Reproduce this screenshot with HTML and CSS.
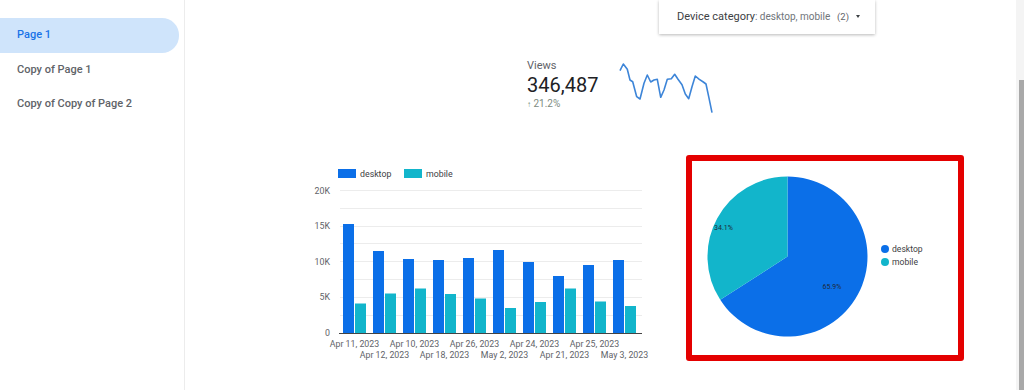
FILE: index.html
```html
<!DOCTYPE html>
<html>
<head>
<meta charset="utf-8">
<link rel="stylesheet" href="styles.css">
</head>
<body>
<div class="app">
  <nav class="sidebar">
    <div class="nav-item active">Page 1</div>
    <div class="nav-item">Copy of Page 1</div>
    <div class="nav-item">Copy of Copy of Page 2</div>
  </nav>
  <main class="main">
    <div class="filter-row">
      <div class="filter">
        <span class="filter-label">Device category<span class="filter-values">: desktop, mobile</span></span>
        <span class="filter-count">(2)</span>
        <span class="caret"></span>
      </div>
    </div>
    <div class="score-row">
      <div class="score">
        <div class="score-title">Views</div>
        <div class="score-value">346,487</div>
        <div class="score-delta"><span class="arrow">&#x2191;</span> 21.2%</div>
      </div>
      <svg class="spark" width="96" height="56" viewBox="0 0 96 56">
        <polyline fill="none" stroke="#3d85d8" stroke-width="1.6" stroke-linejoin="round" points="2,10.7 5.3,4 9.3,9.3 12,20 14.7,21.7 18.7,36.7 22,39 26,23.3 29.3,15 32.7,22 36,20 39.3,19.3 42.7,37.3 46,30 49.3,19.3 53.3,18.7 56.7,14.3 60,19.3 64,24.7 67.3,34 70.7,38.7 74,26.7 77.3,16 81.3,19.3 85.3,22 88,24 90.7,36.7 94,52.7"/>
      </svg>
    </div>
    <div class="chart-row">
      <svg class="bars" width="360" height="205" viewBox="0 0 360 205">
        <g class="legend">
          <rect x="38" y="9" width="18" height="9" fill="#0b6fe8"/>
          <text x="60" y="16.8">desktop</text>
          <rect x="104" y="9" width="18" height="9" fill="#12b5cb"/>
          <text x="126" y="16.8">mobile</text>
        </g>
        <g stroke="#ececec" stroke-width="1">
          <line x1="40" y1="30.5" x2="342" y2="30.5"/>
          <line x1="40" y1="48.5" x2="342" y2="48.5"/>
          <line x1="40" y1="66.5" x2="342" y2="66.5"/>
          <line x1="40" y1="83.5" x2="342" y2="83.5"/>
          <line x1="40" y1="101.5" x2="342" y2="101.5"/>
          <line x1="40" y1="119.5" x2="342" y2="119.5"/>
          <line x1="40" y1="137.5" x2="342" y2="137.5"/>
          <line x1="40" y1="155.5" x2="342" y2="155.5"/>
        </g>
        <g class="ylab" text-anchor="end">
          <text x="30" y="33.5">20K</text>
          <text x="30" y="69">15K</text>
          <text x="30" y="104.5">10K</text>
          <text x="30" y="140">5K</text>
          <text x="30" y="176">0</text>
        </g>
        <g fill="#0b6fe8">
          <rect x="43" y="64" width="11" height="109"/>
          <rect x="73" y="91" width="11" height="82"/>
          <rect x="103" y="99" width="11" height="74"/>
          <rect x="133" y="100" width="11" height="73"/>
          <rect x="163" y="98" width="11" height="75"/>
          <rect x="193" y="90" width="11" height="83"/>
          <rect x="223" y="102" width="11" height="71"/>
          <rect x="253" y="116" width="11" height="57"/>
          <rect x="283" y="105" width="11" height="68"/>
          <rect x="313" y="100" width="11" height="73"/>
        </g>
        <g fill="#12b5cb">
          <rect x="55" y="143.5" width="11" height="29.5"/>
          <rect x="85" y="133.5" width="11" height="39.5"/>
          <rect x="115" y="128.5" width="11" height="44.5"/>
          <rect x="145" y="134" width="11" height="39"/>
          <rect x="175" y="138.5" width="11" height="34.5"/>
          <rect x="205" y="148" width="11" height="25"/>
          <rect x="235" y="142" width="11" height="31"/>
          <rect x="265" y="128.5" width="11" height="44.5"/>
          <rect x="295" y="141.5" width="11" height="31.5"/>
          <rect x="325" y="146" width="11" height="27"/>
        </g>
        <line x1="39" y1="173.5" x2="342" y2="173.5" stroke="#444" stroke-width="1"/>
        <g class="xlab" text-anchor="middle">
          <text x="54.5" y="186.5">Apr 11, 2023</text>
          <text x="84.5" y="198">Apr 12, 2023</text>
          <text x="114.5" y="186.5">Apr 10, 2023</text>
          <text x="144.5" y="198">Apr 18, 2023</text>
          <text x="174.5" y="186.5">Apr 26, 2023</text>
          <text x="204.5" y="198">May 2, 2023</text>
          <text x="234.5" y="186.5">Apr 24, 2023</text>
          <text x="264.5" y="198">Apr 21, 2023</text>
          <text x="294.5" y="186.5">Apr 25, 2023</text>
          <text x="324.5" y="198">May 3, 2023</text>
        </g>
      </svg>
      <div class="pie-box">
        <svg class="pie" width="266" height="194" viewBox="0 0 266 194">
          <path d="M95.5,96.5 L95.5,16.5 A80,80 0 1 1 28.24,139.82 Z" fill="#0b6fe8"/>
          <path d="M95.5,96.5 L28.24,139.82 A80,80 0 0 1 95.5,16.5 Z" fill="#12b5cb"/>
          <text class="pct" x="31.5" y="69.5" text-anchor="middle">34.1%</text>
          <text class="pct" x="140" y="128.5" text-anchor="middle">65.9%</text>
          <circle cx="193" cy="89" r="4" fill="#0b6fe8"/>
          <text class="plegend" x="200" y="92">desktop</text>
          <circle cx="193" cy="102" r="4" fill="#12b5cb"/>
          <text class="plegend" x="200" y="105">mobile</text>
        </svg>
      </div>
    </div>
  </main>
  <div class="scrollbar"><div class="thumb"></div></div>
</div>
</body>
</html>
```

FILE: styles.css
```css
* { box-sizing: border-box; }
html, body { margin: 0; padding: 0; background: #fff; }
body { font-family: Roboto, "Liberation Sans", Arial, sans-serif; }

.app {
  display: flex;
  width: 1024px;
  height: 390px;
  overflow: hidden;
}

.sidebar {
  width: 185px;
  flex: none;
  border-right: 1px solid #ececec;
  padding-top: 18px;
}
.nav-item {
  width: 179px;
  height: 34.5px;
  line-height: 34.5px;
  padding-left: 17px;
  font-size: 11px;
  font-weight: 500;
  color: #5f6368;
  border-radius: 0 17px 17px 0;
}
.nav-item.active {
  background: #cfe4fb;
  color: #1a73e8;
}

.main {
  flex: 1;
  min-width: 0;
}

.filter-row { display: flex; padding-left: 474px; }
.filter {
  width: 216px;
  height: 34px;
  display: flex;
  align-items: center;
  padding: 0 15px 1px 18px;
  background: #fff;
  box-shadow: 0 1px 3px rgba(0,0,0,0.28);
}
.filter-label {
  flex: 1;
  font-size: 11px;
  color: #3c4043;
  white-space: nowrap;
}
.filter-values { font-size: 10px; color: #70757a; }
.filter-count { font-size: 9.5px; color: #5f6368; }
.caret {
  margin-left: 7px;
  width: 0;
  height: 0;
  border-left: 2.5px solid transparent;
  border-right: 2.5px solid transparent;
  border-top: 3px solid #3c4043;
}

.score-row {
  display: flex;
  margin-top: 25px;
  padding-left: 342px;
}
.score { width: 91px; }
.score-title { font-size: 11px; line-height: 14px; color: #5f6368; }
.score-value { font-size: 20px; line-height: 24px; color: #202124; }
.score-delta { font-size: 10px; line-height: 14px; color: #7d8b81; }
.score-delta .arrow { font-size: 8px; color: #6f8a73; }
.spark { display: block; margin-top: 1px; }

.chart-row {
  display: flex;
  align-items: flex-start;
  margin-top: 39px;
  padding-left: 115px;
}
.bars { display: block; margin-top: 5px; flex: none; }
.bars text { font-family: Roboto, "Liberation Sans", Arial, sans-serif; font-size: 8.8px; fill: #5f6368; }
.bars .legend text { fill: #3c4043; }

.pie-box {
  margin-left: 26px;
  width: 278px;
  height: 206px;
  border: 6px solid #e40000;
  border-radius: 3px;
  flex: none;
}
.pie { display: block; margin-top: -1px; }
.pie .pct { font-family: Roboto, "Liberation Sans", Arial, sans-serif; font-size: 7px; fill: #1f2a3a; }
.pie .plegend { font-family: Roboto, "Liberation Sans", Arial, sans-serif; font-size: 8.6px; fill: #3c4043; }

.scrollbar {
  width: 8px;
  flex: none;
  background: #f4f4f4;
  display: flex;
  justify-content: flex-end;
}
.thumb {
  width: 5px;
  margin-top: 80px;
  height: 310px;
  background: #a9a9a9;
}
```
